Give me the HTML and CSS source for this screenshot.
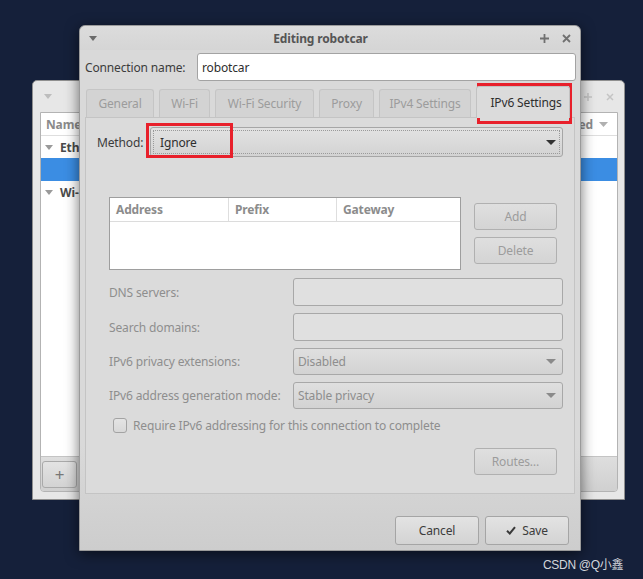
FILE: index.html
```html
<!DOCTYPE html>
<html>
<head>
<meta charset="utf-8">
<title>Editing robotcar</title>
<link rel="stylesheet" href="styles.css">
</head>
<body>
<div class="desktop">
  <div class="win-back">
    <div class="back-title">
      <svg class="tri" width="8" height="5" viewBox="0 0 8 5"><path d="M0 0h8L4 5z" fill="#bdbdbd"/></svg>
      <span class="grow"></span>
      <svg class="wbtn" width="8" height="8" viewBox="0 0 8 8"><path d="M4 0v8M0 4h8" stroke="#c4c4c4" stroke-width="1.5"/></svg>
      <svg class="wbtn" width="8" height="8" viewBox="0 0 8 8"><path d="M1 1l6 6M7 1l-6 6" stroke="#c4c4c4" stroke-width="1.5"/></svg>
    </div>
    <div class="back-frame">
      <div class="back-list">
        <div class="list-head"><span>Name</span><span class="grow"></span><span>Last Used</span><svg class="hdr-tri" width="9" height="5" viewBox="0 0 9 5"><path d="M0 0h9L4.5 5z" fill="#b0b0b0"/></svg></div>
        <div class="list-row grp"><svg width="8" height="5" viewBox="0 0 8 5"><path d="M0 0h8L4 5z" fill="#9a9a9a"/></svg><span>Ethernet</span></div>
        <div class="list-row sel"></div>
        <div class="list-row grp"><svg width="8" height="5" viewBox="0 0 8 5"><path d="M0 0h8L4 5z" fill="#9a9a9a"/></svg><span>Wi-Fi</span></div>
      </div>
      <div class="back-tools"><div class="tool">+</div></div>
    </div>
  </div>

  <div class="dialog">
    <div class="titlebar">
      <svg class="tb-tri" width="8" height="5" viewBox="0 0 8 5"><path d="M0 0h8L4 5z" fill="#6a6a6a"/></svg>
      <div class="title">Editing robotcar</div>
      <svg class="tb-btn" width="9" height="9" viewBox="0 0 9 9"><path d="M4.5 0v9M0 4.5h9" stroke="#707070" stroke-width="1.8"/></svg>
      <svg class="tb-btn" width="9" height="9" viewBox="0 0 9 9"><path d="M1 1l7 7M8 1l-7 7" stroke="#707070" stroke-width="1.8"/></svg>
    </div>
    <div class="dlg-body">
      <div class="name-row">
        <span class="name-lbl">Connection name:</span>
        <div class="entry">robotcar</div>
      </div>
      <div class="tabs">
        <div class="tab t-general">General</div>
        <div class="tab t-wifi">Wi-Fi</div>
        <div class="tab t-sec">Wi-Fi Security</div>
        <div class="tab t-proxy">Proxy</div>
        <div class="tab t-v4">IPv4 Settings</div>
        <div class="tab active t-v6">IPv6 Settings</div>
      </div>
      <div class="panel">
        <div class="method-row">
          <span class="method-lbl">Method:</span>
          <div class="combo focus"><span>Ignore</span><span class="grow"></span><svg width="10" height="5" viewBox="0 0 10 5"><path d="M0 0h10L5 5z" fill="#333"/></svg></div>
        </div>
        <div class="addr-row">
          <div class="addr-table">
            <div class="thead">
              <div class="th th-addr">Address</div>
              <div class="th th-prefix">Prefix</div>
              <div class="th th-gw">Gateway</div>
            </div>
          </div>
          <div class="side-btns">
            <div class="btn disabled">Add</div>
            <div class="btn disabled">Delete</div>
          </div>
        </div>
        <div class="fields">
          <span class="flbl">DNS servers:</span><div class="fentry"></div>
          <span class="flbl">Search domains:</span><div class="fentry"></div>
          <span class="flbl">IPv6 privacy extensions:</span><div class="fcombo"><span>Disabled</span><span class="grow"></span><svg width="10" height="5" viewBox="0 0 10 5"><path d="M0 0h10L5 5z" fill="#8a8a8a"/></svg></div>
          <span class="flbl">IPv6 address generation mode:</span><div class="fcombo"><span>Stable privacy</span><span class="grow"></span><svg width="10" height="5" viewBox="0 0 10 5"><path d="M0 0h10L5 5z" fill="#8a8a8a"/></svg></div>
        </div>
        <div class="check-row"><span class="cb"></span><span>Require IPv6 addressing for this connection to complete</span></div>
        <div class="routes-row"><div class="btn disabled">Routes…</div></div>
      </div>
      <div class="footer">
        <div class="btn fbtn">Cancel</div>
        <div class="btn fbtn"><svg width="10" height="9" viewBox="0 0 10 9"><path d="M1 4.8L3.8 7.5L9 1.2" stroke="#3a3a3a" stroke-width="2" fill="none"/></svg><span>Save</span></div>
      </div>
    </div>
  </div>

  <div class="mark mark-tab"></div>
  <div class="mark mark-method"></div>
  <div class="watermark">CSDN @Q小鑫</div>
</div>
</body>
</html>
```

FILE: styles.css
```css
* { box-sizing: border-box; }
html, body { margin: 0; padding: 0; }
body {
  width: 643px;
  height: 579px;
  overflow: hidden;
  background: #15203a;
  font-family: "Noto Sans", "Liberation Sans", sans-serif;
  font-size: 12px;
  letter-spacing: -0.15px;
  color: #3a3a3a;
}
.desktop { position: relative; width: 643px; height: 579px; }
.grow { flex: 1; }

/* background window */
.win-back {
  position: absolute;
  left: 32px;
  top: 80px;
  width: 593px;
  height: 420px;
  background: #e7e7e7;
  border: 1px solid #8f8f8f;
  border-radius: 5px 5px 0 0;
  display: flex;
  flex-direction: column;
}
.back-title {
  height: 31px;
  flex: none;
  display: flex;
  align-items: center;
  padding: 0 10px 0 11px;
  gap: 14px;
}
.back-frame {
  margin: 0 6px 0 7px;
  height: 380px;
  border: 1px solid #b3b3b3;
  border-radius: 0 0 4px 4px;
  display: flex;
  flex-direction: column;
  overflow: hidden;
}
.back-list { flex: 1; background: #fff; }
.list-head {
  height: 23px;
  display: flex;
  align-items: center;
  padding: 0 9px 0 5px;
  border-bottom: 1px solid #dedede;
  font-weight: bold;
  color: #8a8a8a;
}
.hdr-tri { margin-left: 6px; }
.list-row {
  height: 22px;
  display: flex;
  align-items: center;
  gap: 7px;
  padding-left: 4px;
}
.list-row.grp { font-weight: bold; color: #4a4a4a; }
.list-row.sel { background: #3b8de3; height: 23px; }
.back-tools {
  height: 35px;
  flex: none;
  background: linear-gradient(#dedede, #d0d0d0);
  border-top: 1px solid #c4c4c4;
  padding: 4px 1px;
}
.tool {
  width: 35px;
  height: 27px;
  border: 1px solid #a9a9a9;
  border-radius: 3px;
  background: linear-gradient(#e3e3e3, #d3d3d3);
  display: flex;
  align-items: center;
  justify-content: center;
  color: #777;
  font-size: 17px;
}

/* dialog */
.dialog {
  position: absolute;
  left: 79px;
  top: 25px;
  width: 502px;
  height: 526px;
  background: linear-gradient(#d9d9d9 80%, #cdcdcd);
  border: 1px solid #9a9a9a;
  border-radius: 6px 6px 0 0;
  box-shadow: 0 3px 14px rgba(0, 0, 0, 0.55);
  display: flex;
  flex-direction: column;
}
.titlebar {
  height: 24px;
  flex: none;
  display: flex;
  align-items: center;
  padding: 0 9px 0 9px;
  gap: 13px;
  background: linear-gradient(#dcdcdc, #d5d5d5);
  border-radius: 6px 6px 0 0;
}
.title {
  flex: 1;
  text-align: center;
  font-weight: bold;
  color: #555;
  padding-left: 4px;
}
.dlg-body {
  flex: 1;
  display: flex;
  flex-direction: column;
  padding: 3px 4px 5px 5px;
}
.name-row { display: flex; align-items: center; height: 28px; }
.name-lbl { width: 112px; color: #3c3c3c; }
.entry {
  flex: 1;
  height: 28px;
  background: #fff;
  border: 1px solid #a3a3a3;
  border-radius: 3px;
  display: flex;
  align-items: center;
  padding-left: 4px;
  color: #2e2e2e;
}

.tabs {
  display: flex;
  align-items: flex-end;
  gap: 5px;
  margin-top: 5px;
  padding-left: 1px;
  height: 31px;
  position: relative;
  z-index: 1;
}
.tab {
  height: 28px;
  display: flex;
  align-items: center;
  justify-content: center;
  border: 1px solid #c5c5c5;
  border-bottom: none;
  border-radius: 3px 3px 0 0;
  background: #d3d3d3;
  color: #9c9c9c;
}
.t-general { width: 68px; }
.t-wifi { width: 51px; }
.t-sec { width: 99px; }
.t-proxy { width: 55px; }
.t-v4 { width: 92px; }
.t-v6 { width: 94px; padding-left: 6px; }
.tab.active {
  height: 32px;
  margin-bottom: -1px;
  background: #dbdbdb;
  color: #2e2e2e;
  border-color: #c2c2c2;
}

.panel {
  height: 377px;
  margin-right: 1px;
  background: #dbdbdb;
  border: 1px solid #c4c4c4;
  padding: 9px 11px 0 11px;
  display: flex;
  flex-direction: column;
}
.method-row { display: flex; align-items: center; height: 30px; }
.method-lbl { width: 53px; color: #3c3c3c; white-space: nowrap; }
.combo {
  flex: 1;
  height: 30px;
  display: flex;
  align-items: center;
  padding: 0 6px 0 9px;
  border: 1px solid #a6a6a6;
  border-radius: 3px;
  background: linear-gradient(#e2e2e2, #d3d3d3);
  color: #2e2e2e;
}
.combo.focus { outline: 1px dotted #9a9a9a; outline-offset: -4px; }

.addr-row { display: flex; margin-top: 40px; margin-left: 12px; gap: 13px; }
.addr-table {
  width: 352px;
  height: 73px;
  background: #fff;
  border: 1px solid #9e9e9e;
}
.thead { display: flex; height: 24px; border-bottom: 1px solid #dcdcdc; }
.th {
  display: flex;
  align-items: center;
  padding-left: 6px;
  font-weight: bold;
  color: #8c8c8c;
}
.th-addr { width: 119px; border-right: 1px solid #dedede; }
.th-prefix { width: 108px; border-right: 1px solid #dedede; }
.th-gw { flex: 1; }
.side-btns {
  display: flex;
  flex-direction: column;
  gap: 7px;
  padding-top: 6px;
  width: 83px;
}
.btn {
  height: 27px;
  display: flex;
  align-items: center;
  justify-content: center;
  gap: 6px;
  border: 1px solid #a5a5a5;
  border-radius: 3px;
  background: linear-gradient(#e3e3e3, #d3d3d3);
  color: #3c3c3c;
}
.btn.disabled { color: #9c9c9c; border-color: #b0b0b0; background: linear-gradient(#dfdfdf, #d4d4d4); }

.fields {
  display: grid;
  grid-template-columns: 184px 270px;
  row-gap: 7px;
  margin-top: 8px;
  margin-left: 12px;
  align-items: center;
}
.flbl { color: #8e8e8e; }
.fentry {
  height: 28px;
  background: #e0e0e0;
  border: 1px solid #a8a8a8;
  border-radius: 3px;
}
.fcombo {
  height: 27px;
  display: flex;
  align-items: center;
  padding: 0 6px 0 4px;
  border: 1px solid #a8a8a8;
  border-radius: 3px;
  background: linear-gradient(#dfdfdf, #d3d3d3);
  color: #8e8e8e;
}
.check-row {
  display: flex;
  align-items: center;
  gap: 6px;
  margin-top: 9px;
  margin-left: 16px;
  height: 15px;
  color: #8e8e8e;
}
.cb {
  width: 14px;
  height: 15px;
  border: 1px solid #a3a3a3;
  border-radius: 3px;
  background: linear-gradient(#e4e4e4, #d8d8d8);
}
.routes-row { display: flex; justify-content: flex-end; margin-top: 15px; padding-right: 6px; }
.routes-row .btn { width: 83px; }

.footer {
  display: flex;
  justify-content: flex-end;
  gap: 6px;
  margin-top: auto;
  padding-right: 7px;
}
.fbtn { width: 84px; height: 29px; }

/* annotations */
.mark { position: absolute; border: 3px solid #e8202b; }
.mark-tab { left: 477px; top: 83px; width: 95px; height: 41px; }
.mark-method { left: 146px; top: 123px; width: 87px; height: 35px; }
.watermark {
  position: absolute;
  left: 543px;
  top: 555px;
  font-family: "Liberation Sans", "Noto Sans CJK SC", sans-serif;
  font-size: 12px;
  letter-spacing: -0.3px;
  color: #d3d6dc;
}
```
